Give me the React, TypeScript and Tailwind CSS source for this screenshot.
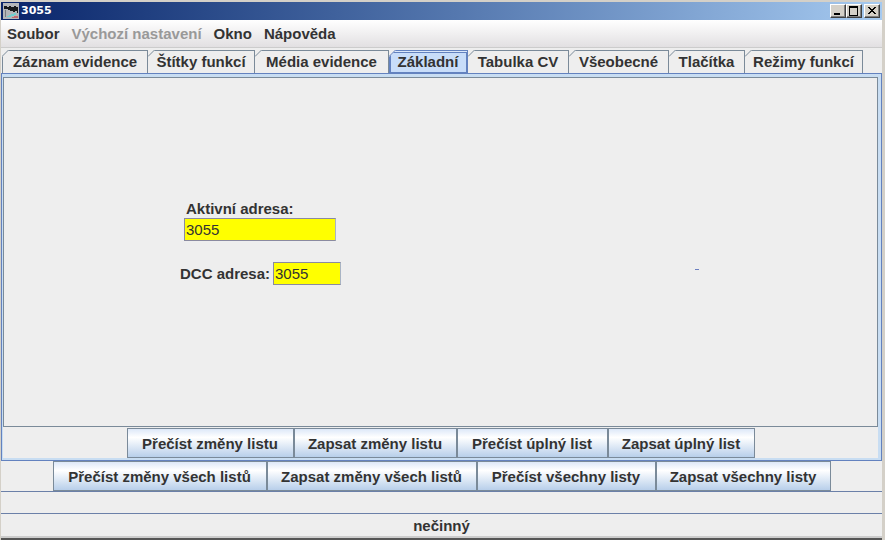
import React from 'react'
import clsx from 'clsx'

const menuItems = [
    { label: 'Soubor' },
    { label: 'Výchozí nastavení', disabled: true },
    { label: 'Okno' },
    { label: 'Nápověda' },
]

const tabs = [
    { label: 'Záznam evidence', width: 'w-[146px]' },
    { label: 'Štítky funkcí', width: 'w-[107px]' },
    { label: 'Média evidence', width: 'w-[134px]' },
    { label: 'Základní', width: 'w-[79px]', active: true },
    { label: 'Tabulka CV', width: 'w-[101px]' },
    { label: 'Všeobecné', width: 'w-[100px]' },
    { label: 'Tlačítka', width: 'w-[76px]' },
    { label: 'Režimy funkcí', width: 'w-[118px]' },
]

const sheetButtons = [
    { label: 'Přečíst změny listu', width: 'w-[167px]' },
    { label: 'Zapsat změny listu', width: 'w-[163px]' },
    { label: 'Přečíst úplný list', width: 'w-[151px]' },
    { label: 'Zapsat úplný list', width: 'w-[147px]' },
]

const allButtons = [
    { label: 'Přečíst změny všech listů', width: 'w-[214px]' },
    { label: 'Zapsat změny všech listů', width: 'w-[210px]' },
    { label: 'Přečíst všechny listy', width: 'w-[179px]' },
    { label: 'Zapsat všechny listy', width: 'w-[175px]' },
]

const AppIcon = () => (
    <svg viewBox="0 0 16 16" className="w-4 h-4" shapeRendering="crispEdges" aria-hidden="true">
        <rect width="16" height="16" fill="#b4b6ba" />
        <path d="M1 3h3v1h2v-1h2v1h3v-1h2v1h2v6h-1v-2h-2v1h-2v-1h-3v-1h-2v-1h-4z" fill="#17191c" />
        <path d="M2 7h1v7h-1z" fill="#777b80" />
        <path d="M4 13h2v-1h2v-1h3v-1h2v2h-2v1h-3v1h-4z" fill="#6fd0d0" />
        <path d="M9 14h2v-1h4v2h-6z" fill="#c46a70" />
    </svg>
)

const TitleButton = ({ label, children }: { label: string, children: React.ReactNode }) => (
    <button aria-label={label} className="w-4 h-[14px] bg-[#d4d0c8] border border-t-white border-l-white border-r-[#404040] border-b-[#404040] shadow-[inset_-1px_-1px_0_#808080]">
        <svg viewBox="0 0 14 12" className="w-[14px] h-3" shapeRendering="crispEdges" fill="none" stroke="black">
            {children}
        </svg>
    </button>
)

const TitleBar = () => (
    <header className="flex items-center h-[18px] pl-0.5 pr-0.5 bg-linear-to-r from-[#0a246a] to-[#a6caf0]">
        <AppIcon />
        <h1 className="flex-1 pl-0.5 text-[11px] leading-4 text-white font-bold font-['DejaVu_Sans',sans-serif]">3055</h1>
        <TitleButton label="Minimalizovat"><path d="M3 9h6" strokeWidth="2" /></TitleButton>
        <TitleButton label="Maximalizovat"><path d="M2.5 1v9.5h8V1" /><path d="M2 2h9" strokeWidth="2" /></TitleButton>
        <div className="w-0.5"></div>
        <TitleButton label="Zavřít"><path d="M3 2h2v1h1v1h2v-1h1v-1h2v1h-1v1h-1v1h-1v1h1v1h1v1h1v1h-2v-1h-1v-1h-2v1h-1v1h-2v-1h1v-1h1v-1h1v-1h-1v-1h-1v-1h-1z" fill="black" stroke="none" /></TitleButton>
    </header>
)

const Tab = ({ label, width, active, first }: { label: string, width: string, active?: boolean, first: boolean }) => (
    <button
        role="tab"
        aria-selected={!!active}
        className={clsx(
            'relative flex justify-center items-center h-[23px] border-t border-r whitespace-nowrap',
            width,
            first && 'border-l',
            active ? 'border-[#6382bf] bg-[#c8ddf9] shadow-[inset_0_1px_0_#dbe8fa,inset_2px_2px_0_#6382bf,inset_-1px_-1px_0_#6382bf]' : 'border-[#7a8a99]',
        )}
    >
        <svg viewBox="0 0 7 7" className={clsx('absolute -top-px w-[7px] h-[7px]', first ? '-left-px' : 'left-0')} aria-hidden="true">
            <path d="M0 0h7L0 7z" fill="#eeeeee" />
            <path d="M0 6.500L6.500 0" stroke={active ? '#6382bf' : '#7a8a99'} fill="none" />
        </svg>
        {label}
    </button>
)

const ButtonRow = ({ items }: { items: { label: string, width: string }[] }) => (
    <div className="flex justify-center">
        {items.map((item) => (
            <button
                key={item.label}
                className={clsx('h-[30px] pt-0.5 border border-[#7a8a99] whitespace-nowrap bg-linear-to-b from-[#dde8f8] via-white via-30% to-[#b8cfea]', item.width)}
            >
                {item.label}
            </button>
        ))}
    </div>
)

const fieldClass = 'h-[23px] px-px bg-[#ffff00] border border-[#8a8aa0] border-r-[#a9b4c4] font-normal'

const BasicPane = () => (
    <div className="flex flex-col h-[350px] pt-[122px] pl-[176px] border border-[#7a8a99] bg-[#eeeeee]">
        <label htmlFor="active" className="pl-1.5 leading-[18px]">Aktivní adresa:</label>
        <input id="active" defaultValue="3055" className={clsx('ml-1 w-[152px]', fieldClass)} />
        <div className="flex items-center pt-[21px]">
            <label htmlFor="dcc" className="w-[93px]">DCC adresa:</label>
            <input id="dcc" defaultValue="3055" className={clsx('w-[68px]', fieldClass)} />
            <span className="ml-[354px] w-1 h-px mb-2 bg-[#6b7fc0]"></span>
        </div>
    </div>
)

const App = () => {
    return (
        <div className="flex flex-col w-full border-t-2 border-l border-r-[3px] border-[#d4d0c8] bg-[#eeeeee] text-[#333333] text-[15px] leading-5 font-bold font-['Liberation_Sans',Arial,sans-serif]">
            <TitleBar />
            <nav className="flex items-center gap-3 h-7 px-1.5 border-b border-[#cccccc] bg-linear-to-b from-white to-[#e2e0e2]">
                {menuItems.map((item) => (
                    <button key={item.label} disabled={item.disabled} className="disabled:text-[#999999]">{item.label}</button>
                ))}
            </nav>
            <div className="flex pt-0.5 pl-px" role="tablist">
                {tabs.map((tab, i) => (
                    <Tab key={tab.label} {...tab} first={i === 0} />
                ))}
            </div>
            <main className="border border-[#6382bf] bg-[#eeeeee]">
                <div className="border-[#c8ddf2] border-t-[3px] border-l border-r-[3px] border-b-2">
                    <BasicPane />
                    <div className="pt-px">
                        <ButtonRow items={sheetButtons} />
                    </div>
                </div>
            </main>
            <ButtonRow items={allButtons} />
            <div className="h-[23px] border-y border-[#6b80a8]"></div>
            <footer className="leading-6 text-center border-b-2 border-[#555555] shadow-[inset_0_-2px_0_#cccccc]">nečinný</footer>
        </div>
    )
}

export default App
